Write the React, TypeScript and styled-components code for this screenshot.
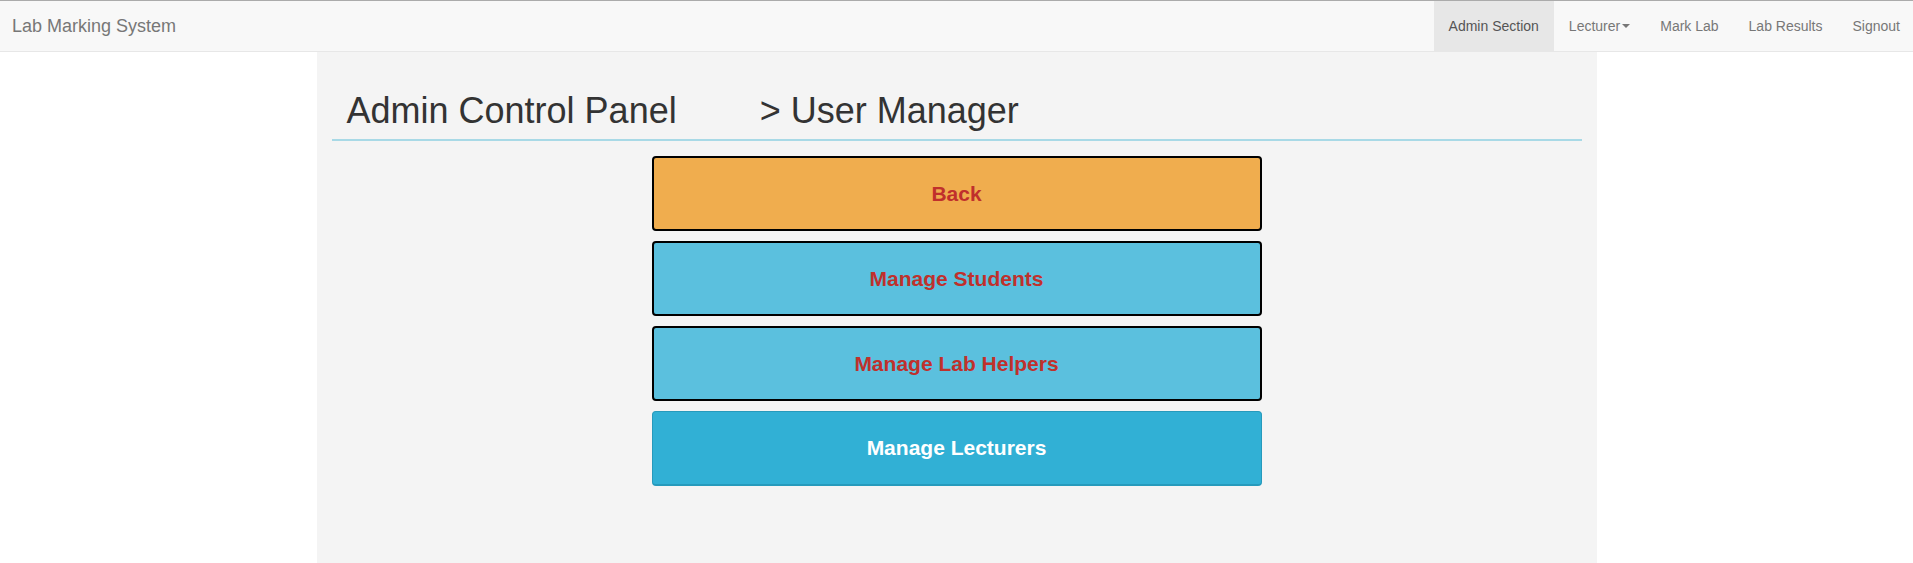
import React from "react";
import styled, { createGlobalStyle } from "styled-components";

const GlobalStyle = createGlobalStyle`
  html, body {
    margin: 0;
    padding: 0;
    background: #ffffff;
    font-family: "Liberation Sans", Arial, Helvetica, sans-serif;
    font-size: 14px;
    color: #333333;
    overflow-x: hidden;
  }
  * { box-sizing: border-box; }
`;

const Navbar = styled.nav`
  display: flex;
  align-items: stretch;
  justify-content: space-between;
  height: 52px;
  background: #f8f8f8;
  border-top: 1px solid #ababab;
  border-bottom: 1px solid #e7e7e7;
`;

const Brand = styled.a`
  display: flex;
  align-items: center;
  padding: 0 15px 0 12px;
  font-size: 18px;
  color: #777777;
  text-decoration: none;
`;

const NavList = styled.ul`
  display: flex;
  margin: 0 -2px 0 0;
  padding: 0;
  list-style: none;
`;

const NavItem = styled.li<{ $active?: boolean }>`
  display: flex;
  align-items: center;
  padding: 0 15px;
  font-size: 14px;
  color: ${(p) => (p.$active ? "#555555" : "#777777")};
  background: ${(p) => (p.$active ? "#e7e7e7" : "transparent")};
  cursor: pointer;
`;

const Caret = styled.span`
  display: inline-block;
  width: 0;
  height: 0;
  margin-left: 2px;
  border-top: 4px solid #777777;
  border-left: 4px solid transparent;
  border-right: 4px solid transparent;
`;

const Panel = styled.main`
  width: 1280px;
  margin: 0 auto;
  min-height: calc(100vh - 52px);
  background: #f4f4f4;
  padding: 0 15px 40px;
`;

const Header = styled.header`
  display: flex;
  padding: 39px 15px 8px;
  border-bottom: 2px solid #a8d9e6;
`;

const Title = styled.h1`
  margin: 0;
  font-size: 36px;
  font-weight: 400;
  line-height: 40px;
  color: #333333;
`;

const Crumb = styled(Title)`
  margin-left: 83px;
`;

const ButtonStack = styled.div`
  display: flex;
  flex-direction: column;
  align-items: center;
  gap: 10px;
  padding-top: 15px;
`;

type Variant = "warning" | "info" | "active";

const ActionButton = styled.button<{ $variant: Variant }>`
  width: 610px;
  height: 75px;
  border-radius: 4px;
  font-family: "Liberation Sans", Arial, Helvetica, sans-serif;
  font-size: 21px;
  font-weight: 700;
  cursor: pointer;
  color: ${(p) => (p.$variant === "active" ? "#ffffff" : "#c0302c")};
  background: ${(p) =>
    p.$variant === "warning" ? "#f0ad4e" : p.$variant === "info" ? "#5bc0de" : "#31b0d5"};
  border: ${(p) => (p.$variant === "active" ? "1px solid #269abc" : "2px solid #000000")};
  border-bottom-width: 2px;
`;

export default function App() {
  return (
    <>
      <GlobalStyle />
      <Navbar>
        <Brand href="#">Lab Marking System</Brand>
        <NavList>
          <NavItem $active>Admin Section</NavItem>
          <NavItem>
            Lecturer
            <Caret />
          </NavItem>
          <NavItem>Mark Lab</NavItem>
          <NavItem>Lab Results</NavItem>
          <NavItem>Signout</NavItem>
        </NavList>
      </Navbar>
      <Panel>
        <Header>
          <Title>Admin Control Panel</Title>
          <Crumb as="h2">&gt; User Manager</Crumb>
        </Header>
        <ButtonStack>
          <ActionButton $variant="warning">Back</ActionButton>
          <ActionButton $variant="info">Manage Students</ActionButton>
          <ActionButton $variant="info">Manage Lab Helpers</ActionButton>
          <ActionButton $variant="active">Manage Lecturers</ActionButton>
        </ButtonStack>
      </Panel>
    </>
  );
}
